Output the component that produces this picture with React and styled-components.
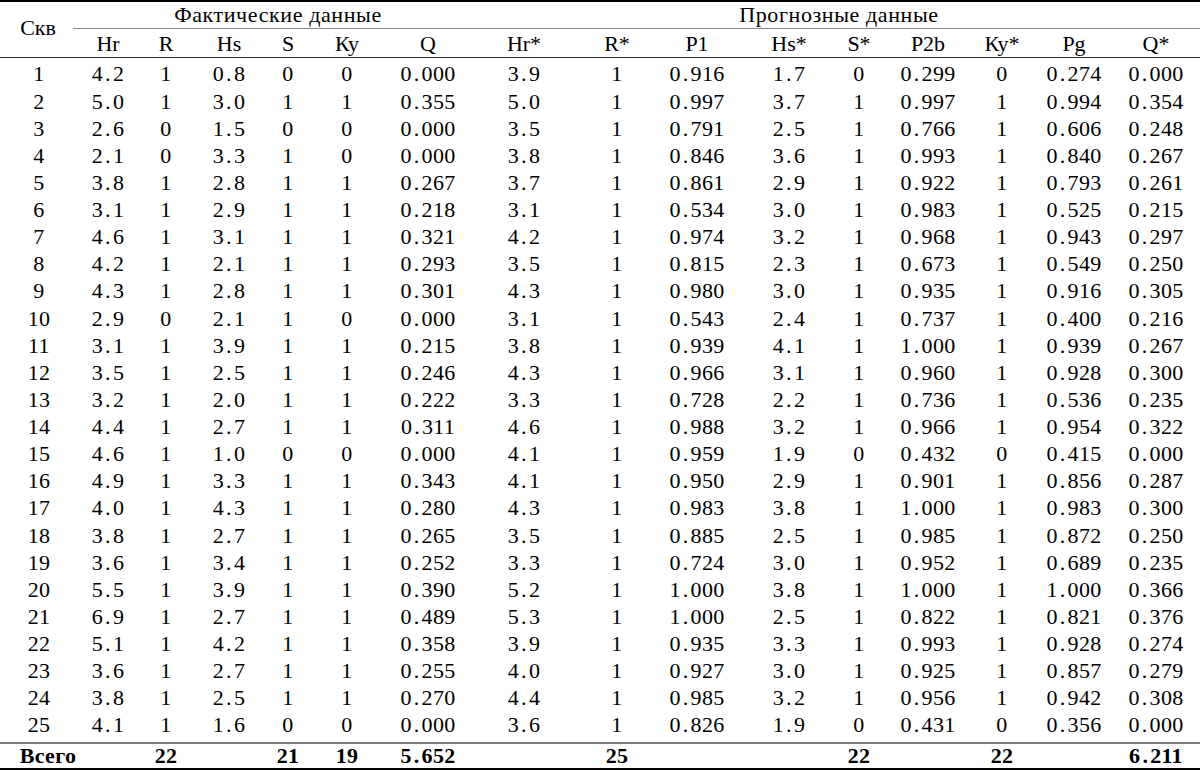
import React from "react";
import styled, { createGlobalStyle } from "styled-components";

// ширины колонок подобраны под центры текста в исходной таблице
const COLUMNS =
  "78px 60px 56px 70px 48px 70px 92px 100px 86px 74px 110px 30px 108px 40px 104px 60px 14px";

const HEADERS = ["Hr", "R", "Hs", "S", "Ку", "Q", "Hr*", "R*", "P1", "Hs*", "S*", "P2b", "Ку*", "Pg", "Q*"];

const ROWS = [
  [1, "4.2", 1, "0.8", 0, 0, "0.000", "3.9", 1, "0.916", "1.7", 0, "0.299", 0, "0.274", "0.000"],
  [2, "5.0", 1, "3.0", 1, 1, "0.355", "5.0", 1, "0.997", "3.7", 1, "0.997", 1, "0.994", "0.354"],
  [3, "2.6", 0, "1.5", 0, 0, "0.000", "3.5", 1, "0.791", "2.5", 1, "0.766", 1, "0.606", "0.248"],
  [4, "2.1", 0, "3.3", 1, 0, "0.000", "3.8", 1, "0.846", "3.6", 1, "0.993", 1, "0.840", "0.267"],
  [5, "3.8", 1, "2.8", 1, 1, "0.267", "3.7", 1, "0.861", "2.9", 1, "0.922", 1, "0.793", "0.261"],
  [6, "3.1", 1, "2.9", 1, 1, "0.218", "3.1", 1, "0.534", "3.0", 1, "0.983", 1, "0.525", "0.215"],
  [7, "4.6", 1, "3.1", 1, 1, "0.321", "4.2", 1, "0.974", "3.2", 1, "0.968", 1, "0.943", "0.297"],
  [8, "4.2", 1, "2.1", 1, 1, "0.293", "3.5", 1, "0.815", "2.3", 1, "0.673", 1, "0.549", "0.250"],
  [9, "4.3", 1, "2.8", 1, 1, "0.301", "4.3", 1, "0.980", "3.0", 1, "0.935", 1, "0.916", "0.305"],
  [10, "2.9", 0, "2.1", 1, 0, "0.000", "3.1", 1, "0.543", "2.4", 1, "0.737", 1, "0.400", "0.216"],
  [11, "3.1", 1, "3.9", 1, 1, "0.215", "3.8", 1, "0.939", "4.1", 1, "1.000", 1, "0.939", "0.267"],
  [12, "3.5", 1, "2.5", 1, 1, "0.246", "4.3", 1, "0.966", "3.1", 1, "0.960", 1, "0.928", "0.300"],
  [13, "3.2", 1, "2.0", 1, 1, "0.222", "3.3", 1, "0.728", "2.2", 1, "0.736", 1, "0.536", "0.235"],
  [14, "4.4", 1, "2.7", 1, 1, "0.311", "4.6", 1, "0.988", "3.2", 1, "0.966", 1, "0.954", "0.322"],
  [15, "4.6", 1, "1.0", 0, 0, "0.000", "4.1", 1, "0.959", "1.9", 0, "0.432", 0, "0.415", "0.000"],
  [16, "4.9", 1, "3.3", 1, 1, "0.343", "4.1", 1, "0.950", "2.9", 1, "0.901", 1, "0.856", "0.287"],
  [17, "4.0", 1, "4.3", 1, 1, "0.280", "4.3", 1, "0.983", "3.8", 1, "1.000", 1, "0.983", "0.300"],
  [18, "3.8", 1, "2.7", 1, 1, "0.265", "3.5", 1, "0.885", "2.5", 1, "0.985", 1, "0.872", "0.250"],
  [19, "3.6", 1, "3.4", 1, 1, "0.252", "3.3", 1, "0.724", "3.0", 1, "0.952", 1, "0.689", "0.235"],
  [20, "5.5", 1, "3.9", 1, 1, "0.390", "5.2", 1, "1.000", "3.8", 1, "1.000", 1, "1.000", "0.366"],
  [21, "6.9", 1, "2.7", 1, 1, "0.489", "5.3", 1, "1.000", "2.5", 1, "0.822", 1, "0.821", "0.376"],
  [22, "5.1", 1, "4.2", 1, 1, "0.358", "3.9", 1, "0.935", "3.3", 1, "0.993", 1, "0.928", "0.274"],
  [23, "3.6", 1, "2.7", 1, 1, "0.255", "4.0", 1, "0.927", "3.0", 1, "0.925", 1, "0.857", "0.279"],
  [24, "3.8", 1, "2.5", 1, 1, "0.270", "4.4", 1, "0.985", "3.2", 1, "0.956", 1, "0.942", "0.308"],
  [25, "4.1", 1, "1.6", 0, 0, "0.000", "3.6", 1, "0.826", "1.9", 0, "0.431", 0, "0.356", "0.000"],
];

const TOTALS = ["Всего", "", "22", "", "21", "19", "5.652", "", "25", "", "", "22", "", "22", "", "6.211"];

// точка в исходнике заметно шире, чем в Times
const Num = ({ value }) => {
  const parts = String(value).split(".");
  if (parts.length < 2) return <>{value}</>;
  return (
    <>
      {parts[0]}
      <Dot>.</Dot>
      {parts[1]}
    </>
  );
};

export default function App() {
  return (
    <>
      <GlobalStyle />
      <Table>
        <Head>
          <RowLabel>Скв</RowLabel>
          <Group $from={2} $to={8} $pull={5}>
            Фактические данные
          </Group>
          <Group $from={8} $to={-1}>
            Прогнозные данные
          </Group>
          {HEADERS.map((h, i) => (
            <ColTitle key={h} $col={i + 2}>
              {h}
            </ColTitle>
          ))}
        </Head>

        <Body>
          {ROWS.map((row) => (
            <Row key={row[0]}>
              {row.map((v, i) => (
                <Cell key={i}>
                  <Num value={v} />
                </Cell>
              ))}
            </Row>
          ))}
        </Body>

        <Footer>
          {TOTALS.map((v, i) => (
            <Cell key={i} $bold $indent={i === 0 ? 18 : 0}>
              <Num value={v} />
            </Cell>
          ))}
        </Footer>
      </Table>
    </>
  );
}

const GlobalStyle = createGlobalStyle`
  html, body {
    margin: 0;
    padding: 0;
    background: #ffffff;
  }
  body {
    font-family: "Liberation Serif", "Times New Roman", serif;
    color: #000000;
  }
`;

const Table = styled.div`
  width: 1200px;
  border-top: 2px solid #000000;
  border-bottom: 2px solid #000000;
  font-size: 22px;
`;

const Head = styled.div`
  display: grid;
  grid-template-columns: ${COLUMNS};
  grid-template-rows: 27px 28px;
  border-bottom: 1.5px solid #333333;
`;

const RowLabel = styled.div`
  grid-column: 1;
  grid-row: 1 / 3;
  display: flex;
  align-items: center;
  justify-content: center;
  padding-bottom: 4px;
  padding-right: 2px;
`;

const Group = styled.div`
  grid-row: 1;
  grid-column: ${(p) => p.$from} / ${(p) => p.$to};
  margin-left: ${(p) => (p.$pull ? -p.$pull : 0)}px;
  padding-left: ${(p) => (p.$pull ? p.$pull + 4 : 4)}px;
  display: flex;
  align-items: flex-end;
  justify-content: center;
  border-bottom: 1.5px solid #8a8a8a;
  white-space: nowrap;
  letter-spacing: 0.6px;
`;

const ColTitle = styled.div`
  grid-row: 2;
  grid-column: ${(p) => p.$col};
  display: flex;
  align-items: flex-end;
  justify-content: center;
  white-space: nowrap;
`;

const Body = styled.div`
  padding: 2.4px 0 3px;
`;

const Row = styled.div`
  display: grid;
  grid-template-columns: ${COLUMNS};
  height: 27.125px;
  line-height: 27.125px;
`;

const Footer = styled.div`
  display: grid;
  grid-template-columns: ${COLUMNS};
  height: 24px;
  line-height: 24px;
  border-top: 2px solid #7a7a7a;
`;

const Cell = styled.div`
  display: flex;
  justify-content: center;
  white-space: nowrap;
  min-width: 0;
  padding-left: ${(p) => p.$indent || 0}px;
  font-weight: ${(p) => (p.$bold ? 700 : 400)};
  letter-spacing: 0.3px;
`;

const Dot = styled.span`
  padding: 0 2px;
`;
